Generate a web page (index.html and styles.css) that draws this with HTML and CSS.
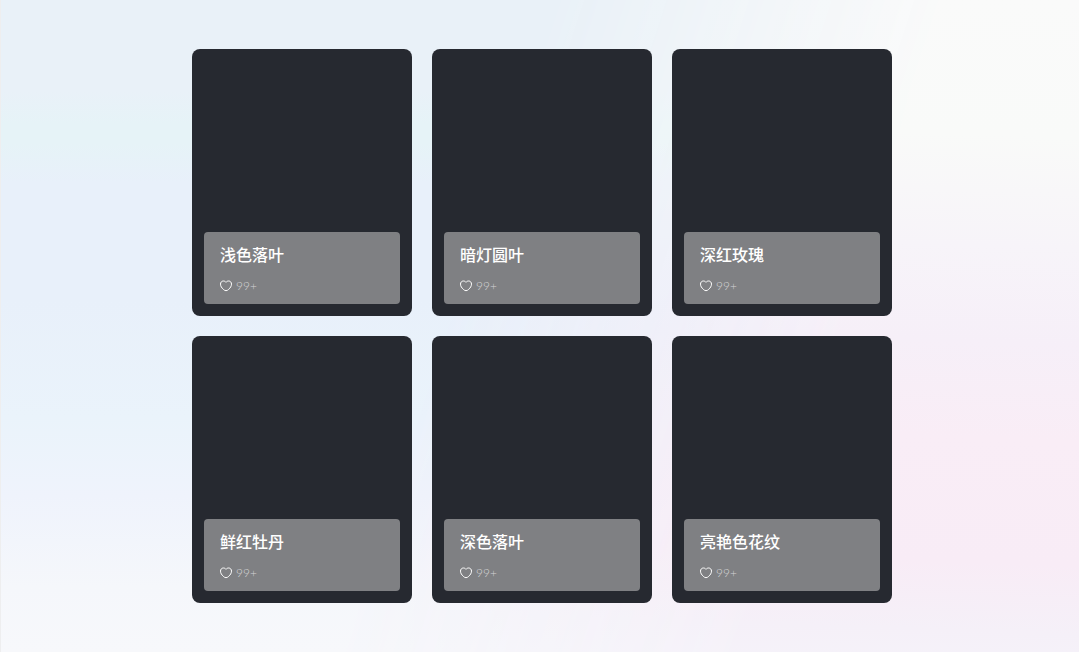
FILE: index.html
```html
<!DOCTYPE html>
<html lang="zh-CN">
<head>
<meta charset="utf-8">
<meta name="viewport" content="width=device-width, initial-scale=1">
<title>壁纸</title>
<link rel="stylesheet" href="styles.css">
</head>
<body>
<svg class="defs" aria-hidden="true">
  <symbol id="heart" viewBox="0 0 12 12">
    <path d="M6 2.3C5.2 1.3 4.3 1 3.4 1 1.7 1 .5 2.3.5 4.1c0 2.1 1.2 3.8 2.8 5.2.9.8 1.6 1.4 2.7 1.4s1.8-.6 2.7-1.4c1.6-1.4 2.8-3.1 2.8-5.2C11.5 2.3 10.3 1 8.6 1 7.7 1 6.8 1.3 6 2.3Z"/>
  </symbol>
</svg>
<main class="gallery">
  <article class="card">
    <div class="info">
      <h2 class="title">浅色落叶</h2>
      <p class="likes"><svg class="heart"><use href="#heart"/></svg><span>99+</span></p>
    </div>
  </article>
  <article class="card">
    <div class="info">
      <h2 class="title">暗灯圆叶</h2>
      <p class="likes"><svg class="heart"><use href="#heart"/></svg><span>99+</span></p>
    </div>
  </article>
  <article class="card">
    <div class="info">
      <h2 class="title">深红玫瑰</h2>
      <p class="likes"><svg class="heart"><use href="#heart"/></svg><span>99+</span></p>
    </div>
  </article>
  <article class="card">
    <div class="info">
      <h2 class="title">鲜红牡丹</h2>
      <p class="likes"><svg class="heart"><use href="#heart"/></svg><span>99+</span></p>
    </div>
  </article>
  <article class="card">
    <div class="info">
      <h2 class="title">深色落叶</h2>
      <p class="likes"><svg class="heart"><use href="#heart"/></svg><span>99+</span></p>
    </div>
  </article>
  <article class="card">
    <div class="info">
      <h2 class="title">亮艳色花纹</h2>
      <p class="likes"><svg class="heart"><use href="#heart"/></svg><span>99+</span></p>
    </div>
  </article>
</main>
</body>
</html>
```
FILE: styles.css
```css
* {
  box-sizing: border-box;
}

body {
  position: relative;
  margin: 0;
  min-height: 100vh;
  padding: 20px 0 20px 4px;
  border-left: 1px solid #eeeeef;
  display: grid;
  place-items: center;
  font-family: Lato, "Noto Sans CJK SC", sans-serif;
  background: linear-gradient(180deg, #e9f1f8 0%, #e9f1f8 14%, #e6f3f7 19%, #e6f3f7 22%, #e8f0fa 28%, #e8f0fa 46%, #eaf3fb 64%, #eff3fc 76%, #f5f7fb 90%, #f7f8fb 100%);
}

/* warm side of the backdrop, faded in from the left */
body::before {
  content: "";
  position: absolute;
  inset: 0;
  background: linear-gradient(182deg, #fafafa 0%, #f9faf9 20%, #f7f4f9 36%, #f6eff8 50%, #f9edf6 64%, #f8ecf6 82%, #f5f0f8 92%, #f5f3fa 100%);
  -webkit-mask-image: linear-gradient(108deg, transparent 42%, #000 74%);
  mask-image: linear-gradient(108deg, transparent 42%, #000 74%);
}

.defs {
  display: none;
}

.gallery {
  position: relative;
  width: 100%;
  max-width: 700px;
  display: grid;
  grid-template-columns: repeat(auto-fit, minmax(200px, 1fr));
  gap: 20px;
}

.card {
  min-height: 267px;
  padding: 12px;
  display: flex;
  align-items: flex-end;
  border-radius: 8px;
  background: #262930;
}

.info {
  flex: 1;
  padding: 10px 16px 9px;
  display: flex;
  flex-direction: column;
  gap: 11px;
  border-radius: 4px;
  background: #7f8083;
}

.title {
  margin: 0;
  font-size: 16px;
  line-height: 24px;
  font-weight: 500;
  font-family: "Noto Sans CJK SC", sans-serif;
  color: #fff;
}

.likes {
  margin: 0;
  display: flex;
  align-items: center;
  gap: 4px;
  font-size: 12px;
  line-height: 18px;
  font-weight: 300;
  color: #d2d3d5;
}

.heart {
  width: 12px;
  height: 12px;
  fill: none;
  stroke: #fff;
  stroke-width: 1;
}
```
